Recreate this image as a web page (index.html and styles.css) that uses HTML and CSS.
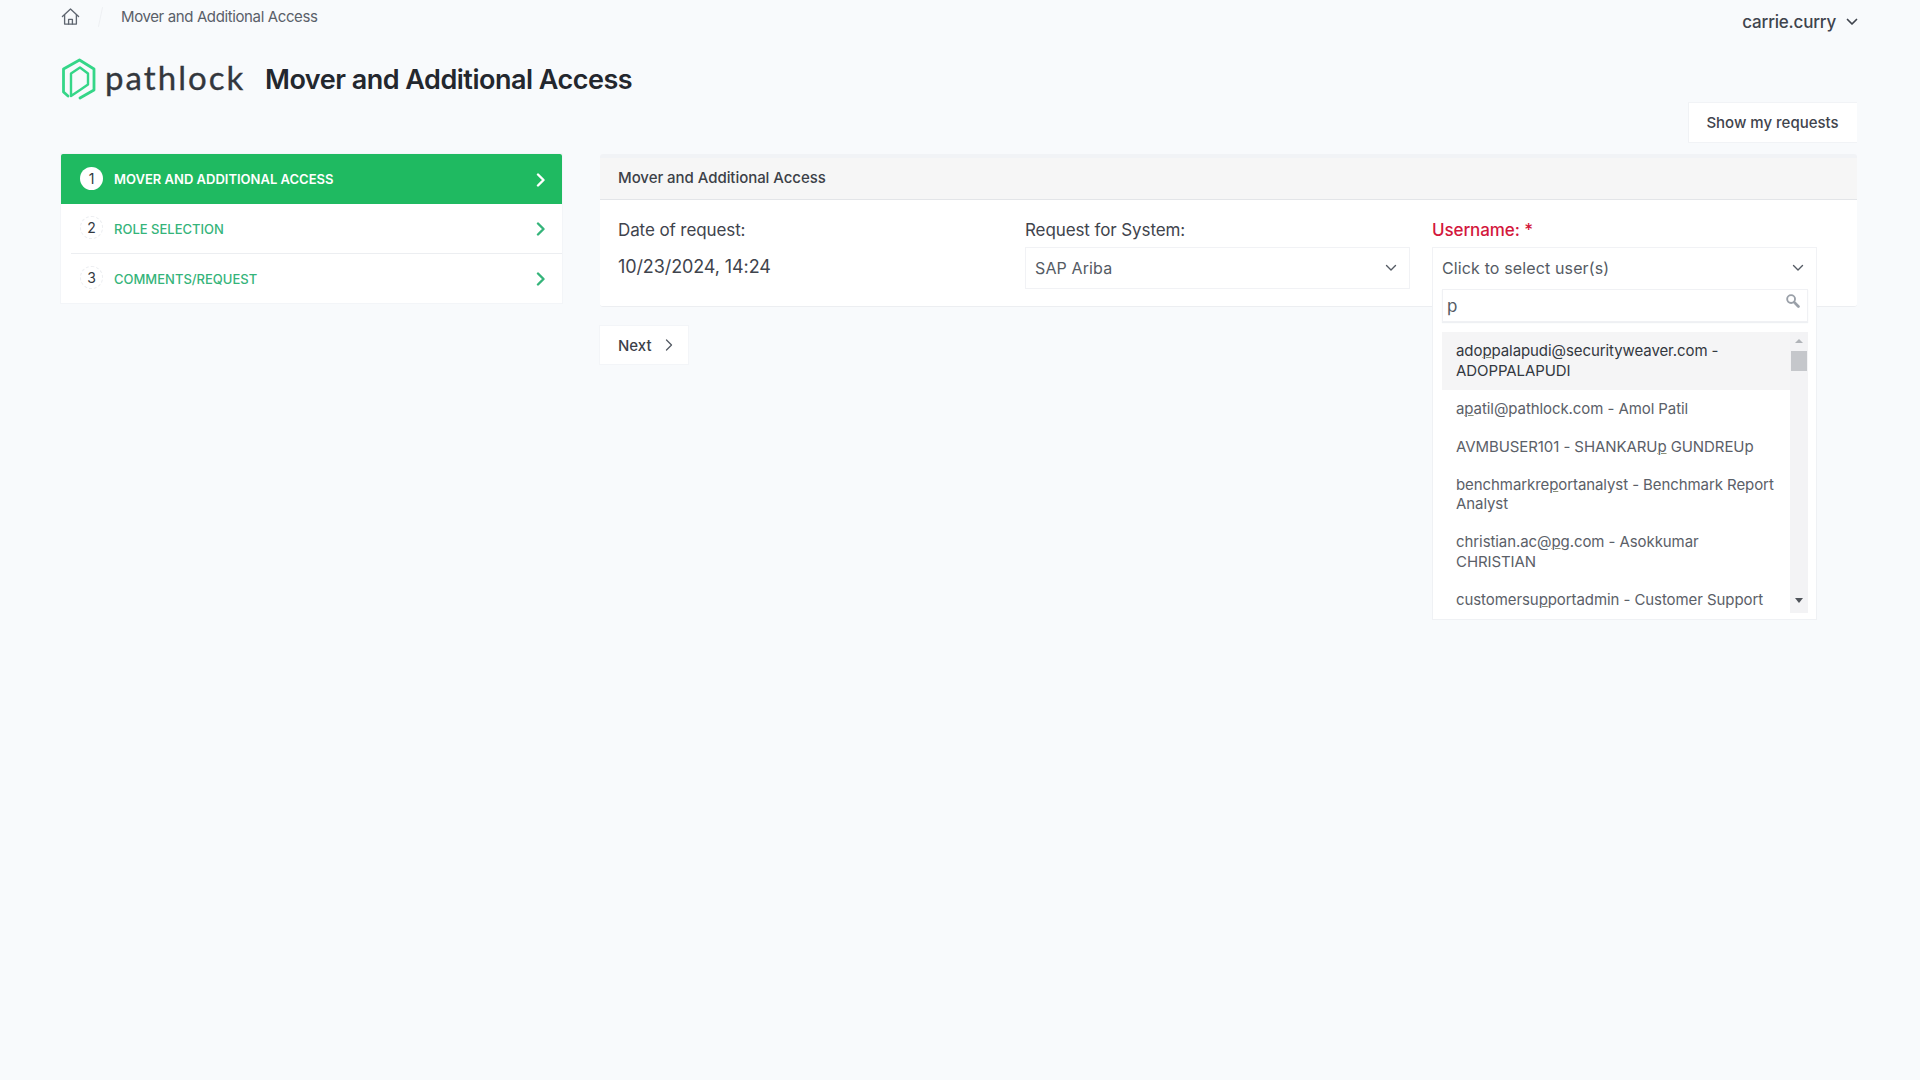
FILE: index.html
```html
<!DOCTYPE html>
<html lang="en">
<head>
<meta charset="utf-8">
<title>Mover and Additional Access</title>
<link rel="stylesheet" href="styles.css">
</head>
<body>
<header class="topbar">
  <nav class="crumbs">
    <svg class="home" viewBox="0 0 20 20" fill="none" stroke="#5f6670" stroke-width="1.400" stroke-linejoin="round" stroke-linecap="round"><path d="M1.500 10 10 2l8.500 8"/><path d="M3.800 8.200V18h12.400V8.200"/><path d="M8 18v-5h4v5"/></svg>
    <span class="slash"></span>
    <span class="crumb">Mover and Additional Access</span>
  </nav>
  <div class="user">carrie.curry
    <svg class="chev-user" viewBox="0 0 12 8" fill="none" stroke="#3f444d" stroke-width="1.700" stroke-linecap="round" stroke-linejoin="round"><path d="M1.500 1.500 6 6l4.500-4.500"/></svg>
  </div>
</header>

<section class="titlebar">
  <div class="logo">
    <svg class="logo-mark" viewBox="5 3 36 42" fill="none" stroke="#35d688" stroke-linejoin="round" stroke-linecap="round"><path stroke-width="2.800" d="M12 41 7.500 37V14L23.500 5 38 14v21l-14 8"/><path stroke-width="2.400" d="M15 41V18.500l9-6 8 6v11l-8 5.500-9 6"/></svg>
    <span class="logo-text">pathlock</span>
  </div>
  <h1 class="title">Mover and Additional Access</h1>
</section>

<div class="toolbar"><button class="btn-requests">Show my requests</button></div>

<main class="content">
  <aside class="steps">
    <div class="step step-active">
      <span class="num">1</span><span class="step-label">MOVER AND ADDITIONAL ACCESS</span>
      <svg class="step-chev" viewBox="0 0 10 14" fill="none" stroke="currentColor" stroke-width="2.400" stroke-linecap="round" stroke-linejoin="round"><path d="M2 1.500 7.500 7 2 12.500"/></svg>
    </div>
    <div class="step step-line">
      <span class="num">2</span><span class="step-label">ROLE SELECTION</span>
      <svg class="step-chev" viewBox="0 0 10 14" fill="none" stroke="currentColor" stroke-width="2.400" stroke-linecap="round" stroke-linejoin="round"><path d="M2 1.500 7.500 7 2 12.500"/></svg>
    </div>
    <div class="step">
      <span class="num">3</span><span class="step-label">COMMENTS/REQUEST</span>
      <svg class="step-chev" viewBox="0 0 10 14" fill="none" stroke="currentColor" stroke-width="2.400" stroke-linecap="round" stroke-linejoin="round"><path d="M2 1.500 7.500 7 2 12.500"/></svg>
    </div>
  </aside>

  <div class="main-col">
    <section class="panel">
      <div class="panel-head">Mover and Additional Access</div>
      <div class="panel-body">
        <div class="field">
          <div class="label">Date of request:</div>
          <div class="value">10/23/2024, 14:24</div>
        </div>
        <div class="field">
          <div class="label">Request for System:</div>
          <div class="select">SAP Ariba
            <svg class="chev" viewBox="0 0 12 8" fill="none" stroke="#555b64" stroke-width="1.400" stroke-linecap="round" stroke-linejoin="round"><path d="M1.500 1.500 6 6l4.500-4.500"/></svg>
          </div>
        </div>
        <div class="field field-user">
          <div class="label label-req">Username: <span class="star">*</span></div>
          <div class="select select-open">Click to select user(s)
            <svg class="chev" viewBox="0 0 12 8" fill="none" stroke="#555b64" stroke-width="1.400" stroke-linecap="round" stroke-linejoin="round"><path d="M1.500 1.500 6 6l4.500-4.500"/></svg>
          </div>
          <div class="dropdown">
            <div class="search">p
              <svg class="search-icon" viewBox="0 0 16 16" fill="none" stroke="#9aa0a8" stroke-linecap="round"><circle cx="6.500" cy="6.500" r="4.200" stroke-width="2"/><path d="m10 10 4.300 4.300" stroke-width="3"/></svg>
            </div>
            <div class="list-wrap">
              <ul class="list">
                <li class="opt opt-hi">ado<u>p</u>palapudi@securityweaver.com - ADOPPALAPUDI</li>
                <li class="opt">a<u>p</u>atil@pathlock.com - Amol Patil</li>
                <li class="opt">AVMBUSER101 - SHANKARU<u>p</u> GUNDREUp</li>
                <li class="opt">benchmarkre<u>p</u>ortanalyst - Benchmark Report Analyst</li>
                <li class="opt">christian.ac@<u>p</u>g.com - Asokkumar CHRISTIAN</li>
                <li class="opt">customersu<u>p</u>portadmin - Customer Support</li>
              </ul>
              <div class="scrollbar">
                <span class="arrow arrow-up"></span>
                <span class="thumb"></span>
                <span class="arrow arrow-down"></span>
              </div>
            </div>
          </div>
        </div>
      </div>
    </section>
    <button class="btn-next">Next
      <svg class="next-chev" viewBox="0 0 8 12" fill="none" stroke="#555b64" stroke-width="1.300" stroke-linecap="round" stroke-linejoin="round"><path d="M1.500 1 6.500 6l-5 5"/></svg>
    </button>
  </div>
</main>
</body>
</html>
```
FILE: styles.css
```css
* { box-sizing: border-box; }
html, body { margin: 0; height: 100%; }
body {
  background: #f8fafc;
  font-family: Inter, "Liberation Sans", sans-serif;
  color: #3f444d;
  padding: 0 63px 0 61px;
  overflow: hidden;
}
.topbar { height: 44px; display: flex; justify-content: space-between; align-items: flex-start; }
.crumbs { display: flex; align-items: center; height: 34px; }
.home { width: 19px; height: 19px; margin-top: -1px; }
.slash { width: 1px; height: 20px; background: #eef0f3; margin: 0 20px; transform: rotate(12deg); }
.crumb { font-size: 15px; color: #5a6069; letter-spacing: -0.38px; margin-top: -1px; }
.user { display: flex; align-items: center; height: 44px; font-size: 17px; font-weight: 500; color: #3f444d; letter-spacing: -0.2px; }
.chev-user { width: 12px; height: 8px; margin-left: 10px; margin-right: -1px; }
.titlebar { display: flex; align-items: center; height: 38px; margin-top: 16px; margin-bottom: 5px; }
.logo { display: flex; align-items: center; width: 204px; }
.logo-mark { width: 36px; height: 42px; flex: none; margin-right: 8px; }
.logo-text { font-family: Lato, sans-serif; font-size: 33px; letter-spacing: 2.05px; color: #33373d; line-height: 38px; margin-top: -4px; -webkit-text-stroke: 0.35px #33373d; }
.title { margin: 0; font-size: 27px; font-weight: 600; color: #23272e; letter-spacing: -0.5px; }
.toolbar { display: flex; justify-content: flex-end; margin-bottom: 12px; }
.btn-requests {
  width: 169px; height: 39px; background: #fff; border: 0; border-left: 1px solid #f0f2f5;
  box-shadow: 0 -1px 0 #f1f3f6, 0 1px 0 #f1f3f6;
  font: 500 15px Inter, sans-serif; color: #3f444d; padding: 0 1px 0 0;
}
.content { display: grid; grid-template-columns: 501px 1257px; gap: 38px; align-items: start; }
.steps { background: #fff; box-shadow: 0 0 0 1px #f3f5f8; }
.step { display: flex; align-items: center; height: 49.500px; padding: 2px 16px 0 19px; color: #35b47a; }
.step-line { border-bottom: 1px solid #eceef1; margin-left: 10px; padding-left: 9px; }
.step-active { background: #1fba61; color: #fff; height: 50px; border-radius: 2px 2px 0 0; padding-top: 0; }
.num {
  width: 23px; height: 23px; border-radius: 50%; flex: none; background: #fff; color: #333941;
  font-size: 14px; display: flex; align-items: center; justify-content: center; margin-right: 11px; margin-top: -4px;
  border: 1px dashed #eceef1;
}
.step-active .num { border: 0; margin-top: -2px; }
.step-label { font-size: 13px; font-weight: 500; flex: 1; }
.step-active .step-label { font-weight: 600; }
.step-chev { width: 10px; height: 14px; flex: none; }
.step-active .step-chev { margin-top: 2px; }
.main-col { display: flex; flex-direction: column; align-items: flex-start; }
.panel { width: 100%; height: 153px; background: #fff; border-top: 4px solid #f1f3f6; border-bottom: 1px solid #eceef1; border-radius: 3px; }
.panel-head {
  height: 42px; background: #f6f6f6; border-bottom: 1px solid #e3e5e8; padding: 0 0 2px 18px;
  display: flex; align-items: center; font-size: 15px; font-weight: 500; color: #3c4148; letter-spacing: -0.05px;
}
.panel-body { display: grid; grid-template-columns: repeat(3, 385px); gap: 22px; padding: 20px 0 0 18px; }
.field { position: relative; }
.label { font-size: 17px; line-height: 20px; color: #3f444d; margin-bottom: 9px; letter-spacing: -0.1px; }
.value { font-size: 18px; line-height: 24px; color: #3f444d; margin-top: 15px; letter-spacing: -0.1px; }
.label-req { color: #d3173c; font-weight: 500; }
.star { color: #d3173c; }
.select {
  height: 42px; display: flex; align-items: center; justify-content: space-between;
  background: #fff; border: 1px solid #f1f2f5; padding: 0 12px 0 9px; font-size: 16px; letter-spacing: 0.13px; color: #555b64; margin-top: -2px;
}
.chev { width: 12px; height: 8px; flex: none; }
.select-open { border-bottom: 0; padding-bottom: 2px; }
.dropdown {
  position: absolute; left: 0; top: 69px; width: 385px; height: 331px; background: #fff; z-index: 5;
  border: 1px solid #eff1f4; border-top: 0; padding: 0 8px 0 9px;
}
.search {
  height: 33px; display: flex; align-items: center; justify-content: space-between;
  border: 1px solid #f0f1f4; padding: 0 7px 0 4px; font-size: 17px; color: #555b64; box-shadow: 0 1px 1px #eef0f3;
}
.search-icon { width: 15px; height: 15px; margin-top: -10px; }
.list-wrap { display: flex; margin-top: 10px; height: 281px; overflow: hidden; }
.list { list-style: none; margin: 0; padding: 0; flex: 1; }
.opt { padding: 9.250px 14px; font-size: 15px; line-height: 19.500px; color: #5b6068; letter-spacing: -0.08px; }
.opt u { text-decoration-color: #8a8f78; text-decoration-thickness: 1px; text-underline-offset: 1px; }
.opt-hi { background: #f5f5f6; color: #33383f; }
.scrollbar { width: 18px; flex: none; background: #f3f3f5; display: flex; flex-direction: column; align-items: center; }
.arrow { width: 0; height: 0; border-left: 4px solid transparent; border-right: 4px solid transparent; }
.arrow-up { border-bottom: 4px solid #b0b3b8; margin-top: 7px; }
.arrow-down { border-top: 5px solid #50545a; margin-top: 227px; }
.thumb { width: 16px; height: 20px; background: #c5c7cb; margin-top: 8px; }
.btn-next {
  margin-top: 19px; width: 88px; height: 38px; background: #fff; border: 0; box-shadow: 0 0 0 1px #f3f5f8;
  display: flex; align-items: center; padding: 0 0 0 18px; font: 500 15px Inter, sans-serif; color: #3c4148;
}
.next-chev { width: 8px; height: 12px; margin-left: 13px; }
```
